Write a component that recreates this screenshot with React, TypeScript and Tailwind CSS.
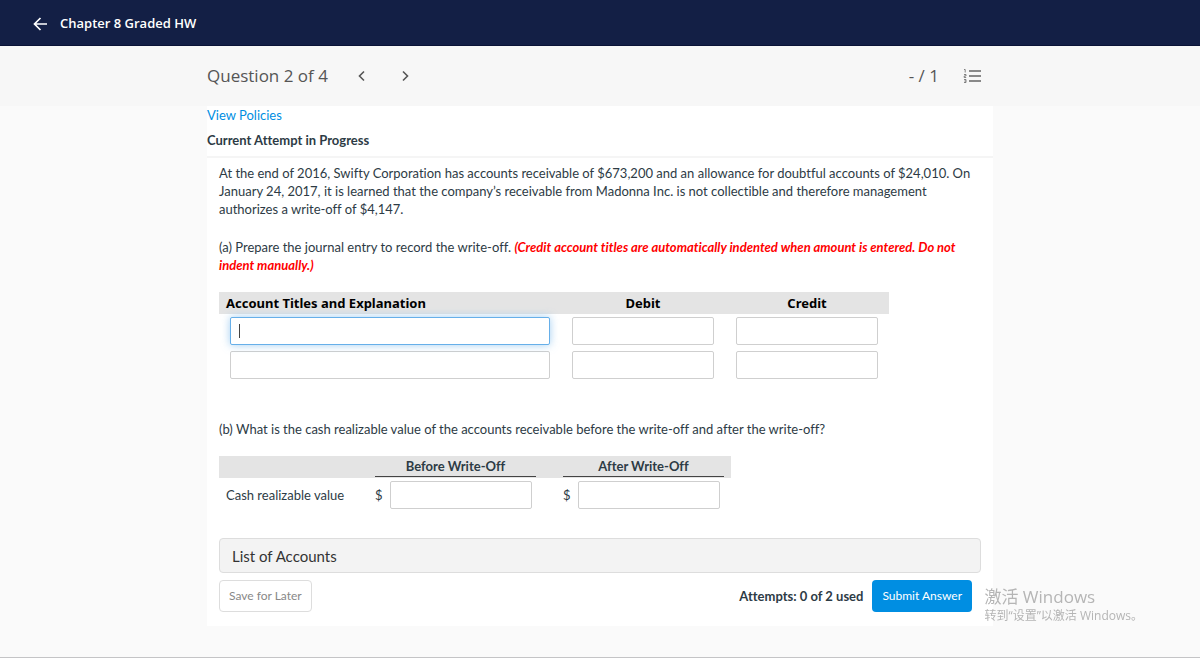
import React from 'react';

const LINES = [1, 2];

const amountInput =
  'block h-7 w-full rounded-xs border border-[#cfcfcf] bg-white px-2 text-sm text-[#2d3b45] outline-none focus:border-[#66afe9]';

function ChevronIcon({ d }: { d: string }) {
  return (
    <svg width="12" height="12" viewBox="0 0 12 12" fill="none" stroke="#555" strokeWidth="1.6" aria-hidden="true">
      <path d={d} />
    </svg>
  );
}

function NumberedListIcon() {
  return (
    <svg width="18" height="16" viewBox="0 0 18 16" fill="none" stroke="#666" aria-hidden="true">
      <path d="M6 3h12M6 8h12M6 13h12" strokeWidth="1.6" />
      <path d="M1 1.5h1.2v3M1 6.5h2v1.5H1.2v1.5h2M1 11.5h2v3H1M1.4 13H3" strokeWidth="0.8" />
    </svg>
  );
}

function TopBar() {
  return (
    <header className="flex h-[46px] items-center gap-3 border-b border-[#0a1336] bg-[#131f45] pt-0.5 pl-[33px] font-['Open_Sans',sans-serif] text-white">
      <button type="button" aria-label="Back">
        <svg width="15" height="14" viewBox="0 0 15 14" fill="none" stroke="currentColor" strokeWidth="1.7" className="block">
          <path d="M14 7H1.5M7.5 1L1.5 7l6 6" />
        </svg>
      </button>
      <h1 className="text-[13px] font-semibold">Chapter 8 Graded HW</h1>
    </header>
  );
}

function QuestionBar() {
  return (
    <div className="bg-[#f7f7f7] font-['Open_Sans',sans-serif] text-[#555]">
      <div className="mx-auto flex h-[60px] max-w-[786px] items-center">
        <h2 className="text-[17px]">Question 2 of 4</h2>
        <div className="ml-7 flex gap-[31px]">
          <button type="button" aria-label="Previous question">
            <ChevronIcon d="M8 1.5L3.5 6 8 10.5" />
          </button>
          <button type="button" aria-label="Next question">
            <ChevronIcon d="M4 1.5L8.5 6 4 10.5" />
          </button>
        </div>
        <span className="ml-auto text-[17px]">- / 1</span>
        <button type="button" aria-label="Question list" className="mr-3 ml-6">
          <NumberedListIcon />
        </button>
      </div>
    </div>
  );
}

function JournalTable() {
  return (
    <table className="w-[670px] table-fixed">
      <thead className="bg-[#e4e4e4] font-['Noto_Sans',sans-serif] text-[13px] leading-[22px] text-black">
        <tr>
          <th className="pl-[7px] text-left font-bold">Account Titles and Explanation</th>
          <th className="w-[164px] text-center font-bold">Debit</th>
          <th className="w-[164px] text-center font-bold">Credit</th>
        </tr>
      </thead>
      <tbody>
        {LINES.map((line) => (
          <tr key={line}>
            <td className="px-[11px] py-[3px]">
              {line === 1 ? (
                <div className="relative">
                  <input
                    type="text"
                    aria-label="Account title, line 1"
                    className="block h-7 w-full rounded-xs border border-[#66afe9] bg-white px-2 text-sm caret-transparent shadow-[0_0_8px_rgba(102,175,233,0.6)] outline-none"
                  />
                  <span className="absolute top-[7px] left-[9px] h-[14px] w-px bg-[#444]" />
                </div>
              ) : (
                <input type="text" aria-label={`Account title, line ${line}`} className={amountInput} />
              )}
            </td>
            <td className="px-[11px] py-[3px]">
              <input type="text" aria-label={`Debit, line ${line}`} className={amountInput} />
            </td>
            <td className="px-[11px] py-[3px]">
              <input type="text" aria-label={`Credit, line ${line}`} className={amountInput} />
            </td>
          </tr>
        ))}
      </tbody>
    </table>
  );
}

function RealizableValueTable() {
  return (
    <table className="w-[512px] table-fixed">
      <thead className="bg-[#e4e4e4]">
        <tr>
          <td className="w-[156px]" />
          <th className="w-[188px] pb-px font-bold">
            <div className="w-[161px] border-b border-[#444] text-center leading-5">Before Write-Off</div>
          </th>
          <th className="pb-px font-bold">
            <div className="w-[161px] border-b border-[#444] text-center leading-5">After Write-Off</div>
          </th>
        </tr>
      </thead>
      <tbody>
        <tr>
          <th className="pl-[7px] text-left font-normal">Cash realizable value</th>
          {['Before write-off', 'After write-off'].map((label) => (
            <td key={label} className="py-[3px]">
              <label className="flex w-[157px] items-center gap-[7px]">
                <span className="w-2">$</span>
                <input type="text" aria-label={label} className={amountInput} />
              </label>
            </td>
          ))}
        </tr>
      </tbody>
    </table>
  );
}

export default function App() {
  return (
    <div className="flex min-h-screen flex-col border-b border-[#c4c4c6] bg-[#fafafa]">
      <TopBar />
      <QuestionBar />

      <main className="mx-auto w-full max-w-[786px] bg-white pb-[14px] font-['Lato',sans-serif] text-[13px] leading-[18px] text-[#2d3b45] [font-variant-ligatures:no-common-ligatures]">
        <a href="#policies" className="block text-[#008ee2]">View Policies</a>
        <h3 className="mt-[7px] border-b-2 border-[#f5f5f5] pb-[7px] font-bold">Current Attempt in Progress</h3>

        <div className="px-3 pt-[6px]">
          <p>
            At the end of 2016, Swifty Corporation has accounts receivable of $673,200 and an allowance for doubtful
            accounts of $24,010. On January 24, 2017, it is learned that the company’s receivable from Madonna Inc. is
            not collectible and therefore management authorizes a write-off of $4,147.
          </p>
          <p className="mt-5 mb-[18px]">
            (a) Prepare the journal entry to record the write-off.{' '}
            <em className="font-bold text-[#f00]">
              (Credit account titles are automatically indented when amount is entered. Do not indent manually.)
            </em>
          </p>
          <JournalTable />

          <p className="mt-[38px] mb-[18px]">
            (b) What is the cash realizable value of the accounts receivable before the write-off and after the write-off?
          </p>
          <RealizableValueTable />

          <button
            type="button"
            className="mt-[26px] block h-[35px] w-full rounded-sm border border-[#ddd] bg-[#f3f3f3] pl-3 text-left text-[15px] text-[#333]"
          >
            List of Accounts
          </button>

          <div className="mt-[7px] flex items-center">
            <button type="button" className="h-8 rounded-sm border border-[#ddd] bg-white px-[9px] text-xs text-[#888]">
              Save for Later
            </button>
            <span className="ml-auto font-bold">Attempts: 0 of 2 used</span>
            <button type="button" className="mr-[9px] ml-[9px] h-8 rounded-sm bg-[#008ee2] px-[10px] text-xs text-white">
              Submit Answer
            </button>
          </div>
        </div>
      </main>

      {/* Windows activation notice */}
      <div className="pointer-events-none fixed right-[57px] bottom-[33px] font-['Open_Sans','Noto_Sans_CJK_SC',sans-serif] text-[#b5b5b5]">
        <p className="text-[17px] leading-5">激活 Windows</p>
        <p className="text-xs leading-[18px]">转到“设置”以激活 Windows。</p>
      </div>
    </div>
  );
}
